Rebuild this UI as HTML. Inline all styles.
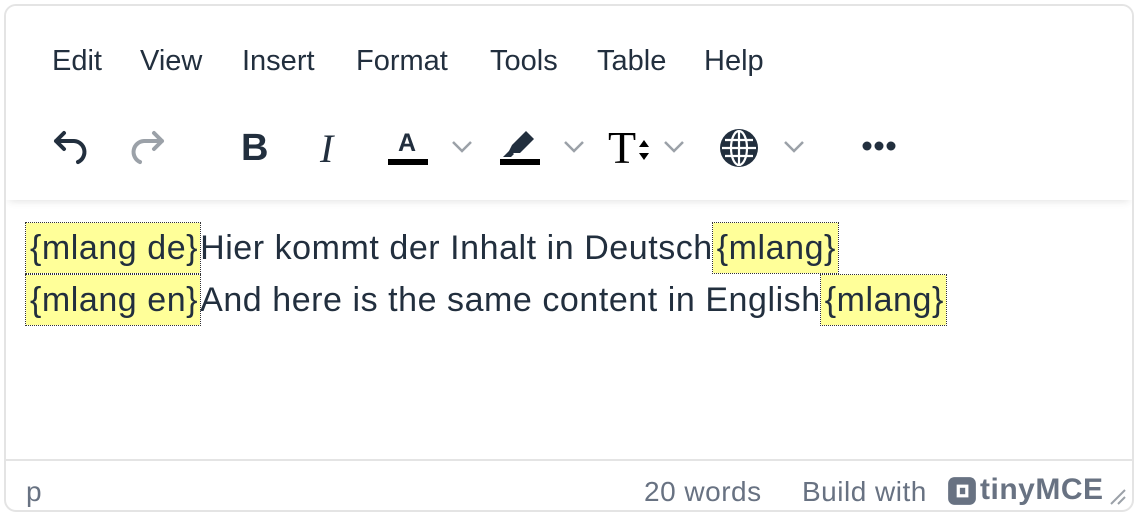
<!DOCTYPE html>
<html><head><style>
*{margin:0;padding:0;box-sizing:border-box}
body{width:1138px;height:516px;background:#fff;font-family:"Liberation Sans",sans-serif;position:relative;overflow:hidden}
.box{position:absolute;left:4px;top:4px;width:1130px;height:508px;border:2px solid #e4e4e4;border-radius:12px;overflow:hidden}
.menu{position:absolute;top:39px;font-size:29px;color:#222f3e}
.tb{position:absolute;left:0;top:0;width:1126px;height:194px;box-shadow:0 4px 8px -3px rgba(0,0,0,.12);background:#fff}
.ic{position:absolute}
.line{position:absolute;left:20px;font-size:34px;letter-spacing:.55px;color:#222f3e;white-space:nowrap}
.m{background:#ffff99;outline:1px dotted #333;padding:6px 2px 6px 4px}
.status{position:absolute;left:0;top:453px;width:1126px;border-top:2px solid #e4e4e4;height:55px;color:#687282;font-size:28px;letter-spacing:.5px}
</style></head><body>
<div class="box">
<div class="tb">
<span class="menu" style="left:46px">Edit</span>
<span class="menu" style="left:134px">View</span>
<span class="menu" style="left:236px">Insert</span>
<span class="menu" style="left:350px">Format</span>
<span class="menu" style="left:484px">Tools</span>
<span class="menu" style="left:591px">Table</span>
<span class="menu" style="left:698px">Help</span>
<div style="position:absolute;left:0;top:-3px;width:1126px;height:200px">
<svg class="ic" style="left:44px;top:124px" width="40" height="40" viewBox="0 0 40 40"><path d="M14 6 L6 14 L14 22 M6 14 H24 A11 11 0 0 1 28 35" fill="none" stroke="#222f3e" stroke-width="4" stroke-linecap="round" stroke-linejoin="round"/></svg>
<svg class="ic" style="left:122px;top:124px" width="40" height="40" viewBox="0 0 40 40"><path d="M26 6 L34 14 L26 22 M34 14 H16 A11 11 0 0 0 12 35" fill="none" stroke="#9ba1a8" stroke-width="4" stroke-linecap="round" stroke-linejoin="round"/></svg>
<span class="ic" style="left:235px;top:124px;font-size:38px;font-weight:bold;color:#222f3e">B</span>
<span class="ic" style="left:314px;top:122px;font-size:40px;font-style:italic;font-family:'Liberation Serif',serif;color:#222f3e">I</span>
<span class="ic" style="left:392px;top:126px;font-size:25px;font-weight:bold;color:#222f3e">A</span>
<div class="ic" style="left:382px;top:156px;width:40px;height:6px;background:#000"></div>
<svg class="ic" style="left:444px;top:136px" width="24" height="16"><path d="M3 3 L12 12 L21 3" fill="none" stroke="#9ba1a8" stroke-width="2.5"/></svg>
<svg class="ic" style="left:494px;top:124px" width="40" height="32" viewBox="0 0 40 32"><path d="M8 26 L12 18 L26 4 L34 12 L20 26 Z" fill="#222f3e"/><path d="M3 30 L10 23 L14 27 L11 30Z" fill="#222f3e"/></svg>
<div class="ic" style="left:494px;top:156px;width:40px;height:6px;background:#000"></div>
<svg class="ic" style="left:556px;top:136px" width="24" height="16"><path d="M3 3 L12 12 L21 3" fill="none" stroke="#9ba1a8" stroke-width="2.5"/></svg>
<span class="ic" style="left:602px;top:118px;font-size:46px;font-family:'Liberation Serif',serif;color:#000">T</span>
<svg class="ic" style="left:632px;top:134px" width="12" height="28"><path d="M1 10 L6 3 L11 10Z M1 16 L6 23 L11 16Z" fill="#000"/></svg>
<svg class="ic" style="left:656px;top:136px" width="24" height="16"><path d="M3 3 L12 12 L21 3" fill="none" stroke="#9ba1a8" stroke-width="2.5"/></svg>
<svg class="ic" style="left:712px;top:124px" width="42" height="42" viewBox="0 0 42 42"><circle cx="21" cy="21" r="19" fill="#222f3e"/><g fill="none" stroke="#fff" stroke-width="2.2"><ellipse cx="21" cy="21" rx="8" ry="17"/><path d="M21 4V38M4 21H38M7 13H35M7 29H35"/></g></svg>
<svg class="ic" style="left:776px;top:136px" width="24" height="16"><path d="M3 3 L12 12 L21 3" fill="none" stroke="#9ba1a8" stroke-width="2.5"/></svg>
<svg class="ic" style="left:854px;top:136px" width="40" height="14"><circle cx="7" cy="7" r="4.5" fill="#222f3e"/><circle cx="19" cy="7" r="4.5" fill="#222f3e"/><circle cx="31" cy="7" r="4.5" fill="#222f3e"/></svg>
</div>
</div>
<div class="line" style="top:216px;line-height:52px"><span class="m">{mlang de}</span>Hier kommt der Inhalt in Deutsch<span class="m">{mlang}</span></div>
<div class="line" style="top:268px;line-height:52px"><span class="m">{mlang en}</span>And here is the same content in English<span class="m">{mlang}</span></div>
<div class="status">
<span style="position:absolute;left:20px;top:15px">p</span>
<span style="position:absolute;left:638px;top:15px">20 words</span>
<span style="position:absolute;left:796px;top:15px">Build with</span>
<svg style="position:absolute;left:940px;top:14px" width="32" height="32" viewBox="0 0 30 30"><rect x="2" y="2" width="26" height="26" rx="6" fill="#687282"/><rect x="10" y="9" width="11" height="12" fill="#fff"/><rect x="13" y="12" width="5" height="6" fill="#687282"/></svg>
<span style="position:absolute;left:974px;top:12px;font-weight:bold;font-size:30px">tinyMCE</span>
<svg style="position:absolute;left:1102px;top:26px" width="20" height="20"><path d="M3 17L17 3M10 17L17 10" stroke="#9ba1a8" stroke-width="2"/></svg>
</div>
</div>
</body></html>
